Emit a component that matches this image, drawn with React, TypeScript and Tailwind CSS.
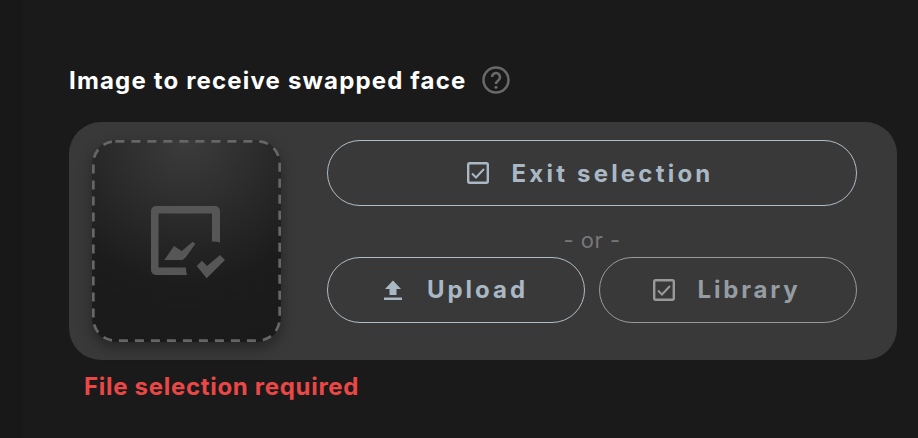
import React from "react";

const CheckBox = ({ className }: { className?: string }) => (
  <svg viewBox="0 0 22 22" className={className} fill="none">
    <rect x="1.200" y="1.200" width="19.600" height="19.600" rx="1.500" stroke="currentColor" strokeWidth="2.400" />
    <path d="M5 11.500l4 4 8-8.500" stroke="currentColor" strokeWidth="2" />
  </svg>
);

const UploadIcon = () => (
  <svg viewBox="0 0 18 20" className="w-[18px] h-[20px]" fill="currentColor">
    <path d="M9 0.500L17 9h-4.500v6h-7v-6H1z" />
    <rect x="0" y="17.500" width="18" height="2.500" />
  </svg>
);

const ImageCheck = () => (
  <svg viewBox="0 0 76 73" className="w-[76px] h-[73px]" fill="#565656">
    <path d="M5 0h59a5 5 0 0 1 5 5v31.500a21 21 0 0 0-8-1V7.500H7.500v54H35a21 21 0 0 0 1 7.500H5a5 5 0 0 1-5-5V5a5 5 0 0 1 5-5z" />
    <path d="M13.300 54L23 40l7.700 5 11-9.300 2.600 2.300L35 51l-3.300 3z" />
    <path d="M45.700 60l5.300-5.300 5 5.300L69 49l5 5-18.300 18.300z" />
  </svg>
);

export default function App() {
  return (
    <div
      className="w-[918px] h-[438px] bg-[#1a1a1a] flex overflow-hidden"
      style={{ fontFamily: '"Inter", "Liberation Sans", sans-serif' }}
    >
      <div className="w-[23px] shrink-0 bg-[#181818]" />
      <div className="flex-1 pl-[46px] pt-[64px]">
        <div className="flex items-center h-[32px] gap-[16px]">
          <span className="text-[24px] font-bold text-white tracking-[1.17px] pt-[1px]">Image to receive swapped face</span>
          <svg viewBox="0 0 28 28" className="w-[28px] h-[28px]" fill="none">
            <circle cx="14" cy="14" r="12.500" stroke="#6a6a6a" strokeWidth="2.500" />
            <path d="M10 11a4 4 0 1 1 6.500 3.200c-1.500 1.100-2.500 1.800-2.500 3.800" stroke="#6a6a6a" strokeWidth="2.500" />
            <circle cx="14" cy="21.300" r="1.500" fill="#6a6a6a" />
          </svg>
        </div>
        <div className="mt-[26px] w-[828px] h-[238px] rounded-[32px] bg-[#393939] flex items-start pt-[18px] pl-[23px] pr-[40px]">
          <div className="relative w-[189px] h-[202px] rounded-[24px] flex items-center justify-center shadow-[0_6px_14px_rgba(0,0,0,0.35)] bg-[radial-gradient(circle_at_50%_0%,#3c3c3c_0%,#1c1c1c_65%,#1a1a1a_100%)] pl-[5px] pt-[2px]">
            <ImageCheck />
            <svg className="absolute inset-0 w-[189px] h-[202px]" viewBox="0 0 189 202" fill="none">
              <rect x="1.350" y="1.350" width="186.300" height="199.300" rx="22" stroke="#666666" strokeWidth="2.700" strokeDasharray="9 7" />
            </svg>
          </div>
          <div className="ml-[46px] w-[530px] flex flex-col">
            <button className="h-[66px] w-full rounded-full border border-[#b0bcc6] flex items-center justify-center gap-[23px] pr-[4px] text-[#a9b8c4] text-[24px] font-bold tracking-[3.2px]">
              <CheckBox className="w-[22px] h-[22px]" />
              <span className="mt-[2px]">Exit selection</span>
            </button>
            <div className="h-[51px] pt-[17px] flex items-center justify-center text-[#777777] text-[22px] tracking-[0.5px]">- or -</div>
            <div className="flex gap-[14px]">
              <button className="h-[66px] w-[258px] rounded-full border border-[#b0bcc6] flex items-center justify-center gap-[25px] text-[#a9b8c4] text-[24px] font-bold tracking-[3px]">
                <UploadIcon />
                <span>Upload</span>
              </button>
              <button className="h-[66px] w-[258px] rounded-full border border-[#9a9a9a] flex items-center justify-center gap-[23px] pr-[3px] text-[#959ca2] text-[24px] font-bold tracking-[2.8px]">
                <CheckBox className="w-[22px] h-[22px] text-[#999999]" />
                <span>Library</span>
              </button>
            </div>
          </div>
        </div>
        <div className="mt-[12px] pl-[15px] text-[#ea4747] text-[24px] font-bold leading-[30px] tracking-[0.7px]">File selection required</div>
      </div>
    </div>
  );
}
